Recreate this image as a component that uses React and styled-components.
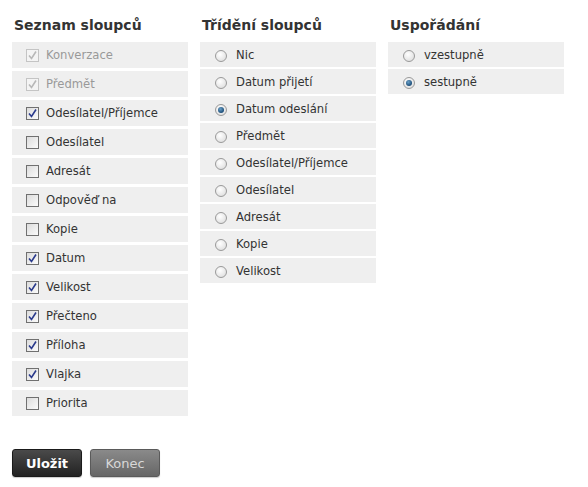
import React from "react";
import styled, { createGlobalStyle } from "styled-components";

const Global = createGlobalStyle`
  html, body { margin: 0; padding: 0; background: #fff; }
  body { font-family: "DejaVu Sans", Verdana, sans-serif; color: #333; }
`;

const Page = styled.div`
  padding: 0 0 0 12px;
  width: 588px;
  height: 487px;
  box-sizing: border-box;
  display: flex;
  flex-direction: column;
`;

const Columns = styled.div`
  display: flex;
  gap: 12px;
  align-items: flex-start;
`;

const Column = styled.div`
  width: 176px;
  display: flex;
  flex-direction: column;
`;

const Heading = styled.h2`
  margin: 0;
  padding: 15px 0 0 2px;
  height: 42px;
  box-sizing: border-box;
  font-size: 14px;
  font-weight: bold;
  color: #333;
  line-height: 20px;
`;

const List = styled.div`
  display: flex;
  flex-direction: column;
  gap: ${(p) => p.$gap}px;
`;

const Row = styled.label`
  display: flex;
  align-items: center;
  height: ${(p) => p.$h}px;
  background: #efefef;
  padding-left: ${(p) => p.$pad}px;
  font-size: 11.6px;
  color: ${(p) => (p.$disabled ? "#999" : "#333")};
`;

const Box = styled.span`
  width: 13px;
  height: 13px;
  box-sizing: border-box;
  border: 1px solid ${(p) => (p.$disabled ? "#c4c4c4" : "#707070")};
  background: ${(p) => (p.$disabled ? "#f4f4f4" : "linear-gradient(135deg, #dcdcdc, #fbfbfb)")};
  margin-right: 7px;
  flex: none;
  display: flex;
  align-items: center;
  justify-content: center;
`;

const Radio = styled.span`
  width: 12px;
  height: 12px;
  box-sizing: border-box;
  border-radius: 50%;
  border: 1px solid #9a9a9a;
  background: radial-gradient(circle at 40% 35%, #fff, #d8d8d8);
  margin-right: 9px;
  margin-top: 2px;
  flex: none;
  display: flex;
  align-items: center;
  justify-content: center;
  &::after {
    content: "";
    display: ${(p) => (p.$on ? "block" : "none")};
    width: 6px;
    height: 6px;
    border-radius: 50%;
    background: radial-gradient(circle at 40% 35%, #6aa0c8, #1b4d78 70%);
  }
`;

const Buttons = styled.div`
  display: flex;
  gap: 8px;
  margin-top: auto;
  margin-bottom: 10px;
`;

const Button = styled.button`
  width: 70px;
  height: 28px;
  border-radius: 3px;
  font-family: "DejaVu Sans", Verdana, sans-serif;
  font-size: 13px;
  cursor: pointer;
  border: 1px solid ${(p) => (p.$primary ? "#1a1a1a" : "#5a5a5a")};
  background: ${(p) =>
    p.$primary
      ? "linear-gradient(#4a4a4a, #222)"
      : "linear-gradient(#8a8a8a, #666)"};
  color: ${(p) => (p.$primary ? "#fff" : "#d8d8d8")};
  font-weight: ${(p) => (p.$primary ? "bold" : "normal")};
  box-shadow: 0 1px 1px rgba(0, 0, 0, 0.2);
`;

const Check = ({ disabled }) => (
  <svg width="11" height="11" viewBox="0 0 11 11">
    <path
      d="M2 5.5 L4.5 8.5 L9 1.5"
      fill="none"
      stroke={disabled ? "#b8b8b8" : "#2a3a8c"}
      strokeWidth="1.6"
    />
  </svg>
);

const checks = [
  ["Konverzace", true, true],
  ["Předmět", true, true],
  ["Odesílatel/Příjemce", true],
  ["Odesílatel", false],
  ["Adresát", false],
  ["Odpověď na", false],
  ["Kopie", false],
  ["Datum", true],
  ["Velikost", true],
  ["Přečteno", true],
  ["Příloha", true],
  ["Vlajka", true],
  ["Priorita", false],
];

const sorts = [
  "Nic",
  "Datum přijetí",
  "Datum odeslání",
  "Předmět",
  "Odesílatel/Příjemce",
  "Odesílatel",
  "Adresát",
  "Kopie",
  "Velikost",
];

export default function App() {
  return (
    <>
      <Global />
      <Page>
        <Columns>
          <Column>
            <Heading>Seznam sloupců</Heading>
            <List $gap={3}>
              {checks.map(([t, on, dis]) => (
                <Row key={t} $h={26} $pad={14} $disabled={dis}>
                  <Box $disabled={dis}>{on && <Check disabled={dis} />}</Box>
                  {t}
                </Row>
              ))}
            </List>
          </Column>
          <Column>
            <Heading>Třídění sloupců</Heading>
            <List $gap={2}>
              {sorts.map((t) => (
                <Row key={t} $h={25} $pad={15}>
                  <Radio $on={t === "Datum odeslání"} />
                  {t}
                </Row>
              ))}
            </List>
          </Column>
          <Column>
            <Heading>Uspořádání</Heading>
            <List $gap={2}>
              <Row $h={25} $pad={15}>
                <Radio />
                vzestupně
              </Row>
              <Row $h={25} $pad={15}>
                <Radio $on />
                sestupně
              </Row>
            </List>
          </Column>
        </Columns>
        <Buttons>
          <Button $primary>Uložit</Button>
          <Button>Konec</Button>
        </Buttons>
      </Page>
    </>
  );
}
